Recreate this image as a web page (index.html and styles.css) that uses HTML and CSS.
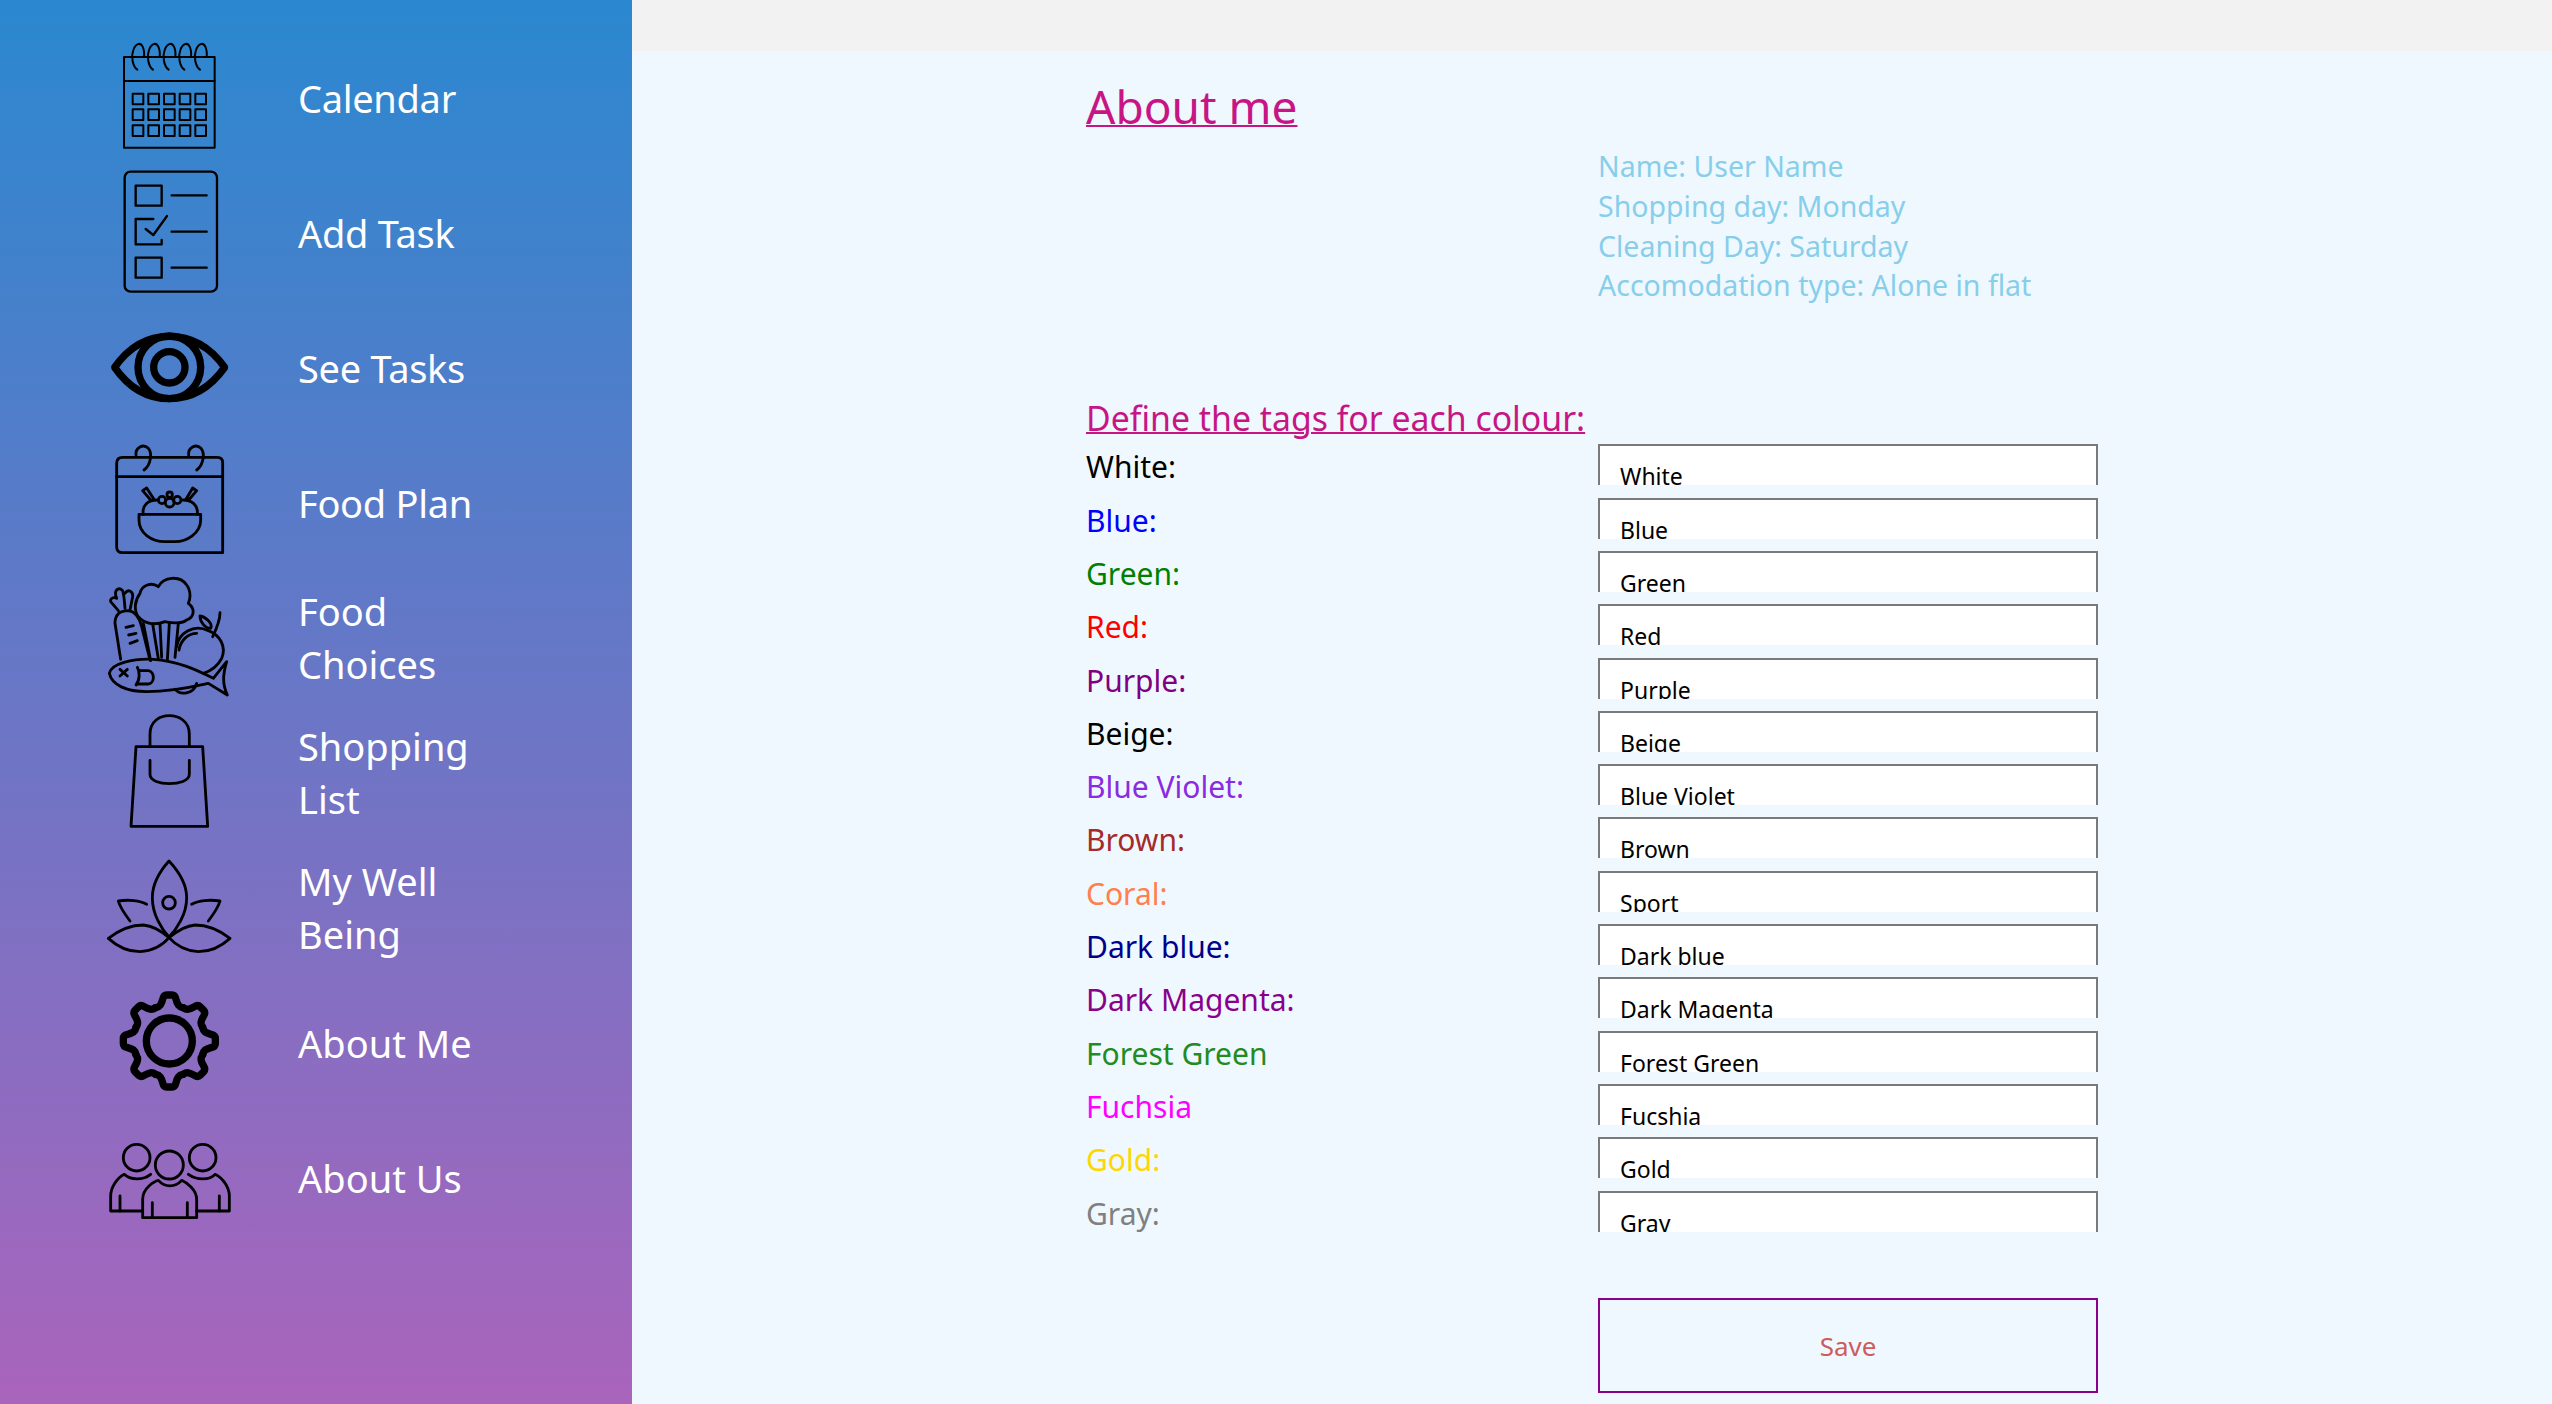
FILE: index.html
```html
<!DOCTYPE html>
<html lang="en">
<head>
<meta charset="utf-8">
<title>About me</title>
<link rel="stylesheet" href="styles.css">
</head>
<body>
<div class="app">
  <nav class="sidebar">
    <a class="nav-item">
      <svg class="nav-icon" viewBox="57 30 420 405">
        <defs>
          <path id="coil" d="M172 149C157 138 153 108 160 90C167 70 181 66 188 80C193 90 193 100 192 111"/>
          <rect id="cell" width="32" height="32"/>
        </defs>
        <g class="thin">
          <use href="#coil"/><use href="#coil" x="47"/><use href="#coil" x="94"/><use href="#coil" x="141"/><use href="#coil" x="188"/>
          <rect x="132" y="111" width="272" height="272"/>
          <path d="M132 183H404"/>
          <use href="#cell" x="158" y="221"/><use href="#cell" x="205" y="221"/><use href="#cell" x="252" y="221"/><use href="#cell" x="299" y="221"/><use href="#cell" x="346" y="221"/>
          <use href="#cell" x="158" y="268"/><use href="#cell" x="205" y="268"/><use href="#cell" x="252" y="268"/><use href="#cell" x="299" y="268"/><use href="#cell" x="346" y="268"/>
          <use href="#cell" x="158" y="316"/><use href="#cell" x="205" y="316"/><use href="#cell" x="252" y="316"/><use href="#cell" x="299" y="316"/><use href="#cell" x="346" y="316"/>
        </g>
      </svg>
      <span class="nav-label single">Calendar</span>
    </a>
    <a class="nav-item">
      <svg class="nav-icon" viewBox="57 435 420 405">
        <g class="mid">
          <rect x="134" y="455" width="277" height="360" rx="18"/>
          <rect x="167" y="497" width="78" height="60"/>
          <rect x="167" y="713" width="78" height="60"/>
          <path d="M220 597H167V673H245V660"/>
          <path d="M197 627L220 645L261 588"/>
          <path d="M275 526H380M275 635H380M275 743H380"/>
        </g>
      </svg>
      <span class="nav-label single">Add Task</span>
    </a>
    <a class="nav-item">
      <svg class="nav-icon" viewBox="27 -30 420 405">
        <g class="heavy">
          <path d="M74 172C115 113 170 79 238 79C305 79 362 113 404 172C362 231 305 266 238 266C170 266 115 231 74 172Z"/>
          <circle cx="238" cy="172" r="94"/>
          <circle cx="238" cy="172" r="47"/>
        </g>
      </svg>
      <span class="nav-label single">See Tasks</span>
    </a>
    <a class="nav-item">
      <svg class="nav-icon" viewBox="57 45 420 405">
        <g class="bold">
          <path d="M128 112H412Q428 112 428 128V398H128Q110 398 110 380V130Q110 112 128 112Z"/>
          <path d="M110 170H428"/>
          <path d="M168 106C165 82 190 70 205 85C218 100 212 135 192 150"/>
          <path d="M326 106C323 82 348 70 363 85C376 100 370 135 350 150"/>
          <path d="M177 283H362V300C362 340 320 365 285 365H255C215 365 177 340 177 300Z"/>
          <path d="M190 283C185 255 205 240 232 240M308 240C335 240 355 255 352 283"/>
          <path d="M222 238L200 204L188 212L212 240M318 238L338 204L350 212L326 240"/>
          <circle cx="246" cy="240" r="11"/>
          <circle cx="292" cy="240" r="11"/>
          <circle cx="269" cy="248" r="13"/>
          <circle cx="269" cy="224" r="8"/>
        </g>
      </svg>
      <span class="nav-label single">Food Plan</span>
    </a>
    <a class="nav-item">
      <svg class="nav-icon" viewBox="57 450 420 405">
        <g class="bold">
          <path d="M175 590C160 570 165 540 180 520C185 495 215 485 235 500C250 470 300 465 320 495C335 515 330 540 325 550C345 565 345 590 320 600C300 615 270 608 255 605C230 615 195 615 175 590Z"/>
          <path d="M190 610L212 722M218 612L235 716M240 612L245 712M268 610L262 722M295 610L285 712"/>
          <path d="M122 718L105 610C105 580 125 572 145 572C170 575 180 600 185 620L210 720"/>
          <path d="M138 622L160 617M146 645L168 640M150 670L172 662"/>
          <path d="M115 572L92 545C90 535 100 530 110 535C100 510 115 500 128 512C130 518 132 525 135 565M135 520C145 505 160 515 158 530L150 570"/>
          <path d="M88 760C95 730 160 715 220 718C290 722 350 750 400 775L440 725C430 760 425 790 442 825L385 790C340 800 280 815 200 815C140 815 95 795 88 760Z"/>
          <path d="M120 748L142 768M142 748L120 768"/>
          <path d="M172 742C180 755 180 780 168 795M180 752H205C225 755 225 790 205 792H175"/>
          <path d="M290 680C295 640 340 610 385 632C420 645 440 680 425 715C415 735 400 750 370 760"/>
          <path d="M297 690C302 660 325 640 350 640"/>
          <path d="M420 578C420 600 410 625 398 650"/>
          <path d="M360 588C375 590 400 610 392 625C375 625 360 605 360 588Z"/>
          <path d="M285 808C300 825 340 825 350 790"/>
        </g>
      </svg>
      <span class="nav-label">Food<br>Choices</span>
    </a>
    <a class="nav-item">
      <svg class="nav-icon" viewBox="57 15 420 405">
        <g class="bold">
          <path d="M210 135V100C210 60 240 44 268 44C296 44 328 60 328 100V135"/>
          <path d="M168 137H368L383 376H153Z"/>
          <path d="M210 178V220C210 240 240 248 268 248C296 248 328 240 328 220V178"/>
        </g>
      </svg>
      <span class="nav-label">Shopping<br>List</span>
    </a>
    <a class="nav-item">
      <svg class="nav-icon" viewBox="57 0 420 405">
        <g class="bold">
          <path d="M267 60C240 90 217 130 217 170C217 220 245 265 267 288C290 265 320 220 320 170C320 130 295 90 267 60Z"/>
          <circle cx="267" cy="185" r="19"/>
          <path d="M85 292C120 265 150 252 190 252C225 255 250 275 267 290C250 310 220 330 180 332C140 332 110 315 85 292Z"/>
          <path d="M450 292C415 265 385 252 345 252C310 255 285 275 267 290C285 310 315 330 355 332C395 332 425 315 450 292Z"/>
          <path d="M150 240C135 220 120 200 115 180C145 175 180 178 200 190"/>
          <path d="M385 240C400 220 415 200 420 180C390 175 355 178 335 190"/>
        </g>
      </svg>
      <span class="nav-label">My Well<br>Being</span>
    </a>
    <a class="nav-item">
      <svg class="nav-icon" viewBox="57 405 420 405">
        <defs>
          <path id="tooth" d="M-41 -100C-28 -102 -24 -110 -20 -125Q-17 -138 -8 -138H8Q17 -138 20 -125C24 -110 28 -102 41 -100"/>
        </defs>
        <g class="heavy" transform="translate(268 600)">
          <circle r="69"/>
          <use href="#tooth"/><use href="#tooth" transform="rotate(45)"/><use href="#tooth" transform="rotate(90)"/><use href="#tooth" transform="rotate(135)"/>
          <use href="#tooth" transform="rotate(180)"/><use href="#tooth" transform="rotate(225)"/><use href="#tooth" transform="rotate(270)"/><use href="#tooth" transform="rotate(315)"/>
        </g>
      </svg>
      <span class="nav-label">About Me</span>
    </a>
    <a class="nav-item">
      <svg class="nav-icon" viewBox="57 810 420 405">
        <g class="bold">
          <circle cx="170" cy="950" r="40"/>
          <circle cx="368" cy="950" r="40"/>
          <circle cx="268" cy="972" r="42"/>
          <path d="M188 1130V1075C188 1040 225 1020 235 1018C255 1040 285 1040 305 1018C320 1025 350 1045 350 1075V1130Z"/>
          <path d="M217 1085V1130M322 1085V1130"/>
          <path d="M188 1110H92V1065C92 1040 110 1012 133 1000C150 1018 190 1018 212 1000"/>
          <path d="M350 1110H448V1065C448 1040 430 1012 405 1000C390 1018 350 1018 325 1000"/>
          <path d="M120 1065V1110M418 1065V1110"/>
        </g>
      </svg>
      <span class="nav-label">About Us</span>
    </a>
  </nav>
  <div class="content">
    <div class="topbar"></div>
    <main class="panel">
      <h1 class="title">About me</h1>
      <div class="info">
        <div>Name: User Name</div>
        <div>Shopping day: Monday</div>
        <div>Cleaning Day: Saturday</div>
        <div>Accomodation type: Alone in flat</div>
      </div>
      <h2 class="subtitle">Define the tags for each colour:</h2>
      <div class="tags">
        <div class="tag-label c-black">White:</div><div class="tag-input">White</div>
        <div class="tag-label c-blue">Blue:</div><div class="tag-input">Blue</div>
        <div class="tag-label c-green">Green:</div><div class="tag-input">Green</div>
        <div class="tag-label c-red">Red:</div><div class="tag-input">Red</div>
        <div class="tag-label c-purple">Purple:</div><div class="tag-input">Purple</div>
        <div class="tag-label c-black">Beige:</div><div class="tag-input">Beige</div>
        <div class="tag-label c-violet">Blue Violet:</div><div class="tag-input">Blue Violet</div>
        <div class="tag-label c-brown">Brown:</div><div class="tag-input">Brown</div>
        <div class="tag-label c-coral">Coral:</div><div class="tag-input">Sport</div>
        <div class="tag-label c-navy">Dark blue:</div><div class="tag-input">Dark blue</div>
        <div class="tag-label c-magenta">Dark Magenta:</div><div class="tag-input">Dark Magenta</div>
        <div class="tag-label c-forest">Forest Green</div><div class="tag-input">Forest Green</div>
        <div class="tag-label c-fuchsia">Fuchsia</div><div class="tag-input">Fucshia</div>
        <div class="tag-label c-gold">Gold:</div><div class="tag-input">Gold</div>
        <div class="tag-label c-gray">Gray:</div><div class="tag-input">Gray</div>
      </div>
      <button class="save" type="button">Save</button>
    </main>
  </div>
</div>
</body>
</html>
```
FILE: styles.css
```css
* { box-sizing: border-box; }
html, body { margin: 0; height: 100%; overflow: hidden; }
body { font-family: "Noto Sans", "Open Sans", sans-serif; background: #f0f8ff; }
.app { display: flex; height: 1404px; }

.sidebar {
  width: 632px; flex: none; padding-top: 30px;
  background: linear-gradient(180deg, #2a88d0 0%, #aa64bc 100%);
}
.nav-item { display: flex; align-items: center; height: 135.1px; color: #fff; }
.nav-icon { width: 140px; height: 135px; margin-left: 99px; flex: none; overflow: visible; }
.nav-icon g { fill: none; stroke: #000; stroke-linecap: round; stroke-linejoin: round; }
.nav-icon .thin { stroke-width: 6; }
.nav-icon .mid { stroke-width: 7; }
.nav-icon .bold { stroke-width: 8.5; }
.nav-icon .heavy { stroke-width: 22; }
.nav-label { margin-left: 59px; font-size: 38px; line-height: 53.4px; }
.nav-label.single { padding-top: 2px; letter-spacing: -0.3px; }

.content { flex: 1; display: flex; flex-direction: column; min-width: 0; }
.topbar { height: 51px; background: #f2f2f2; flex: none; }
.panel { flex: 1; padding-left: 454px; display: flex; flex-direction: column; align-items: flex-start; }

.title {
  margin: 23px 0 0; font-size: 46px; font-weight: 400; line-height: 64px;
  color: #c71585; text-decoration: underline; text-decoration-thickness: 2px;
}
.info { margin: 9px 0 0 512px; font-size: 28.5px; line-height: 39.8px; color: #87ceeb; white-space: nowrap; }
.subtitle {
  margin: 88px 0 0; font-size: 33.8px; font-weight: 400; line-height: 48px;
  color: #c71585; text-decoration: underline; text-decoration-thickness: 2px;
}
.tags { margin-top: 2px; display: grid; grid-template-columns: 512px 500px; grid-auto-rows: 53.33px; }
.tag-label { font-size: 30px; line-height: 46px; }
.tag-input {
  height: 41px; overflow: hidden; background: #fff; color: #000;
  border: solid #7a7a7a; border-width: 2px 2px 0;
  padding: 14px 0 0 20px; font-size: 23px; line-height: 33px;
}
.save {
  margin: 54px 0 0 512px; width: 500px; height: 95px; padding: 0;
  background: transparent; border: 2px solid #8b008b; border-radius: 0;
  color: #cd5c5c; font: inherit; font-size: 26px;
}
.c-black { color: #000; } .c-blue { color: #00f; } .c-green { color: #008000; }
.c-red { color: #f00; } .c-purple { color: #800080; } .c-violet { color: #8a2be2; }
.c-brown { color: #a52a2a; } .c-coral { color: #ff7f50; } .c-navy { color: #00008b; }
.c-magenta { color: #8b008b; } .c-forest { color: #228b22; } .c-fuchsia { color: #f0f; }
.c-gold { color: #ffd700; } .c-gray { color: #808080; }
```
